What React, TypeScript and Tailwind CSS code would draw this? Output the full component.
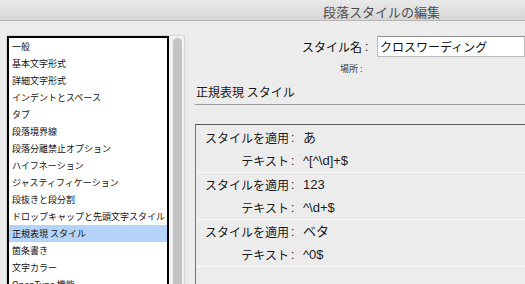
import React from "react";

const items = [
  "一般",
  "基本文字形式",
  "詳細文字形式",
  "インデントとスペース",
  "タブ",
  "段落境界線",
  "段落分離禁止オプション",
  "ハイフネーション",
  "ジャスティフィケーション",
  "段抜きと段分割",
  "ドロップキャップと先頭文字スタイル",
  "正規表現 スタイル",
  "箇条書き",
  "文字カラー",
  "OpenType 機能",
];

const rules = [
  { style: "あ", text: "^[^\\d]+$" },
  { style: "123", text: "^\\d+$" },
  { style: "ベタ", text: "^0$" },
];

const jp = { fontFamily: '"Noto Sans CJK JP", "Liberation Sans", sans-serif' };
const mixed = { fontFamily: '"Liberation Sans", "Noto Sans CJK JP", sans-serif' };

function Line({ label, value }: { label: string; value: string }) {
  return (
    <div className="flex h-[20px] items-center text-[12px] leading-[20px] text-[#1a1a1a]">
      <span className="w-[93px] shrink-0 text-right" style={jp}>
        {label}
      </span>
      <span className="w-[14px] shrink-0 pl-[2px]" style={mixed}>
        :
      </span>
      <span className="text-[13px]" style={mixed}>
        {value}
      </span>
    </div>
  );
}

export default function App() {
  return (
    <div className="flex h-[284px] w-[525px] flex-col overflow-hidden bg-[#ececec]" style={jp}>
      <div className="h-[21px] shrink-0 border-b border-[#b4b4b4] bg-gradient-to-b from-[#e9e9e9] to-[#d7d7d7] pl-[323px] pt-[3px] text-[13px] leading-[18px] text-[#4d4d4d]">
        段落スタイルの編集
      </div>
      <div className="flex flex-1 pl-[6px] pt-[14px]">
        <div className="flex h-[260px] w-[179px] shrink-0 border border-[#d6d6d6] bg-[#f2f2f2]">
          <div className="w-[162px] shrink-0 border-2 border-black bg-white">
            {items.map((it, i) => (
              <div
                key={it}
                className={
                  "h-[17px] whitespace-nowrap pl-[3px] text-[9px] leading-[17px] text-[#111] " +
                  (i === 11 ? "bg-[#b4d4fb]" : "")
                }
              >
                {it}
              </div>
            ))}
          </div>
          <div className="ml-[4px] mt-[2px] w-[9px] shrink-0 rounded-t-full bg-[#c3c3c3]" />
        </div>
        <div className="ml-[10px] flex flex-1 flex-col">
          <div className="mt-[1px] flex h-[21px] items-center text-[12px] text-[#111]">
            <span className="w-[167px] shrink-0 text-right">スタイル名</span>
            <span className="w-[15px] shrink-0 pl-[3px]" style={mixed}>
              :
            </span>
            <div className="flex h-[21px] flex-1 items-center border border-[#bcbcbc] border-t-[#8f8f8f] bg-white pl-[2px] text-[12px]">
              クロスワーディング
            </div>
          </div>
          <div className="mt-[6px] flex h-[12px] items-center text-[9px] leading-[12px] text-[#3a3a3a]">
            <span className="w-[163px] shrink-0 text-right">場所</span>
            <span className="pl-[2px]" style={mixed}>
              :
            </span>
          </div>
          <div className="mt-[9px] h-[16px] pl-[1px] text-[12px] leading-[16px] text-[#1a1a1a]">
            正規表現 スタイル
          </div>
          <div className="mt-[4px] h-px bg-[#9b9b9b]" />
          <div className="mt-[19px] flex-1 border-l border-t border-l-[#707070] border-t-[#575757] pt-[1px]">
            {rules.map((r) => (
              <div
                key={r.style}
                className="flex flex-col gap-[3px] border-b border-[#fafafa] pb-[1px] pt-[2px]"
              >
                <Line label="スタイルを適用" value={r.style} />
                <Line label="テキスト" value={r.text} />
              </div>
            ))}
          </div>
        </div>
      </div>
    </div>
  );
}
